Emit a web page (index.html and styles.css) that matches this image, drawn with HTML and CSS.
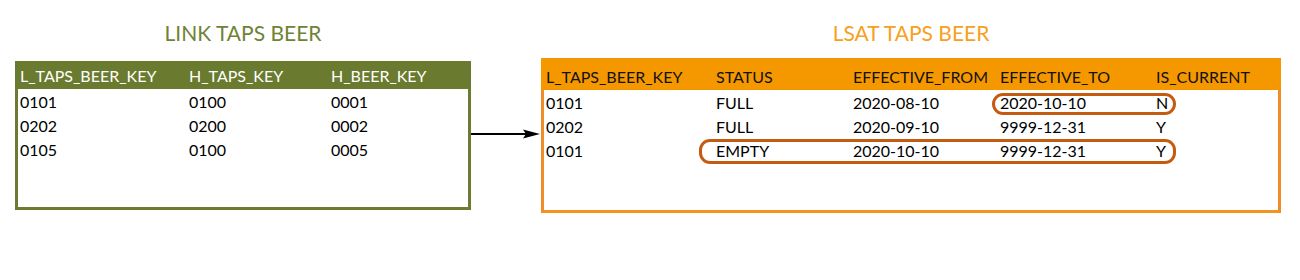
FILE: index.html
```html
<!DOCTYPE html>
<html>
<head>
<meta charset="utf-8">
<link rel="stylesheet" href="styles.css">
</head>
<body>
<div class="canvas">
  <section class="diagram link">
    <h2 class="title">LINK TAPS BEER</h2>
    <div class="table">
      <div class="row head">
        <span>L_TAPS_BEER_KEY</span><span>H_TAPS_KEY</span><span>H_BEER_KEY</span>
      </div>
      <div class="row"><span>0101</span><span>0100</span><span>0001</span></div>
      <div class="row"><span>0202</span><span>0200</span><span>0002</span></div>
      <div class="row"><span>0105</span><span>0100</span><span>0005</span></div>
    </div>
  </section>
  <svg class="arrow" width="70" height="12" viewBox="0 0 70 12">
    <line x1="0" y1="6" x2="56" y2="6" stroke="#000" stroke-width="2"/>
    <polygon points="52,1.5 69,6 52,10.5 55,6" fill="#000"/>
  </svg>
  <section class="diagram lsat">
    <h2 class="title">LSAT TAPS BEER</h2>
    <div class="table">
      <div class="row head">
        <span>L_TAPS_BEER_KEY</span><span>STATUS</span><span>EFFECTIVE_FROM</span><span>EFFECTIVE_TO</span><span>IS_CURRENT</span>
      </div>
      <div class="row"><span>0101</span><span>FULL</span><span>2020-08-10</span><span>2020-10-10</span><span>N</span></div>
      <div class="row"><span>0202</span><span>FULL</span><span>2020-09-10</span><span>9999-12-31</span><span>Y</span></div>
      <div class="row"><span>0101</span><span>EMPTY</span><span>2020-10-10</span><span>9999-12-31</span><span>Y</span></div>
      <div class="mark mark-a"></div>
      <div class="mark mark-b"></div>
    </div>
  </section>
</div>
</body>
</html>
```

FILE: styles.css
```css
* { box-sizing: border-box; }
html, body { margin: 0; padding: 0; background: #fff; }
body { font-family: Lato, "Open Sans", sans-serif; color: #000; }

.canvas {
  display: flex;
  align-items: flex-start;
  padding: 18px 0 0 15px;
}

.title {
  margin: 0;
  font-weight: 400;
  font-size: 21px;
  line-height: 30px;
  text-align: center;
}

.link { width: 456px; }
.lsat { width: 740px; }

.link .title { color: #6f8236; }
.lsat .title { color: #f7a01e; }

.arrow { margin-top: 110px; flex: none; display: block; }

.table {
  position: relative;
  border: 3px solid;
  border-top: 0;
  font-size: 16px;
}

.link .table {
  margin-top: 13px;
  height: 149px;
  border-color: #6b7b2f;
}
.lsat .table {
  margin-top: 10px;
  height: 155px;
  border-color: #f08d2a;
  border-bottom-color: #f39420;
}

.row {
  display: grid;
  height: 24px;
  align-items: center;
  padding-left: 2px;
}
.row.head {
  margin: 0 -3px;
  padding-left: 5px;
}
.link .row { grid-template-columns: 169px 142px 1fr; }
.lsat .row { grid-template-columns: 170px 137px 147px 156px 1fr; }

.link .row.head { height: 28px; background: #6a7a2e; color: #fff; padding-top: 1px; }
.lsat .row.head { height: 32px; background: #f59800; color: #111; padding-top: 5px; }

.mark {
  position: absolute;
  border: 3px solid #c55a11;
  border-radius: 11px;
}
.mark-a { left: 448px; top: 35px; width: 184px; height: 22px; }
.mark-b { left: 155px; top: 81px; width: 477px; height: 25px; }
```
